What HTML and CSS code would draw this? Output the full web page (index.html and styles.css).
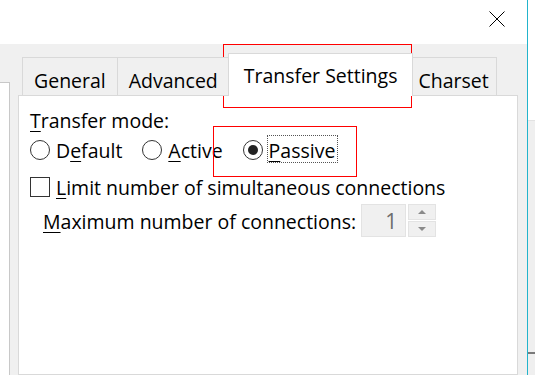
FILE: index.html
```html
<!DOCTYPE html>
<html lang="en">
<head>
  <meta charset="UTF-8">
  <title>Site settings - Transfer Settings</title>
  <link rel="stylesheet" href="styles.css">
</head>
<body>
  <div class="screen">
    <div class="window">
      <div class="titlebar">
        <button class="close" aria-label="Close">
          <svg width="16" height="16" viewBox="0 0 16 16"><path d="M0.5 0.5 L15.5 15.5 M15.5 0.5 L0.5 15.5" stroke="#000" stroke-width="1" fill="none"/></svg>
        </button>
      </div>
      <div class="dialog">
        <div class="sidelist"></div>
        <div class="tabs">
          <div class="tabstrip">
            <div class="tab">General</div>
            <div class="tab">Advanced</div>
            <div class="tab selected">Transfer Settings</div>
            <div class="tab">Charset</div>
          </div>
          <div class="panel">
            <div class="row heading"><u>T</u>ransfer mode:</div>
            <div class="row options">
              <label class="option"><span class="radio"></span><span class="text">D<u>e</u>fault</span></label>
              <label class="option"><span class="radio"></span><span class="text"><u>A</u>ctive</span></label>
              <label class="option"><span class="radio checked"></span><span class="text focus"><u>P</u>assive</span></label>
            </div>
            <label class="row option check-row"><span class="checkbox"></span><span class="text"><u>L</u>imit number of simultaneous connections</span></label>
            <div class="row maxconn">
              <span class="text"><u>M</u>aximum number of connections:</span>
              <div class="spinner">
                <div class="spin-value">1</div>
                <div class="spin-buttons">
                  <div class="spin-btn"><span class="arrow up"></span></div>
                  <div class="spin-btn"><span class="arrow down"></span></div>
                </div>
              </div>
            </div>
          </div>
        </div>
      </div>
    </div>
    <div class="edge"></div>
    <div class="behind"><div class="behind-bar"></div></div>
  </div>
  <!-- highlight marks -->
  <div class="mark mark-tab"></div>
  <div class="mark mark-passive"></div>
</body>
</html>
```

FILE: styles.css
```css
* { box-sizing: border-box; margin: 0; padding: 0; }
html, body { width: 100%; height: 100%; overflow: hidden; }
body {
  background: #fff; color: #000;
  font-family: "Open Sans", "Noto Sans", sans-serif; font-size: 19.5px; line-height: 28px;
}
u { text-decoration-thickness: 1px; text-underline-offset: 3px; }

.screen { display: flex; height: 375px; }
.window { width: 527px; display: flex; flex-direction: column; }
.edge { width: 1px; background: #22b4cc; }
.behind { flex: 1; background: #fff; position: relative; }
.behind-bar { position: absolute; left: 0; right: 0; top: 120px; bottom: 0; background: #efefef; border-top: 1px solid #e2e2e2; }
.behind-bar::after { content: ""; position: absolute; left: 0; right: 0; top: 231px; height: 2px; background: #7a7a7a; }

/* title bar */
.titlebar { height: 44px; background: #fff; display: flex; justify-content: flex-end; padding-right: 7px; }
.close { border: none; background: none; width: 46px; display: flex; align-items: center; justify-content: center; padding-bottom: 7px; }

/* dialog body */
.dialog { flex: 1; display: flex; background: #f0f0f0; }
.sidelist { width: 10px; margin-top: 38px; background: #fff; border: 1px solid #c8c8c8; border-left: none; border-bottom: none; }
.tabs { width: 500px; margin-left: 8px; margin-top: 9px; display: flex; flex-direction: column; }

.tabstrip { display: flex; align-items: flex-end; padding-left: 4px; margin-bottom: -1px; position: relative; z-index: 1; }
.tab {
  border: 1px solid #d9d9d9; background: #f0f0f0;
  padding: 9px 11px 0; white-space: nowrap;
}
.tab + .tab { margin-left: -1px; }
.tab:last-child { padding: 9px 7px 0; }
.tab.selected {
  background: #fff; border-bottom: none;
  padding: 8px 15px 6px; margin: 0 -2px; position: relative; z-index: 1;
}

.panel { flex: 1; background: #fff; border: 1px solid #d9d9d9; padding: 11px 11px; }
.row { display: flex; align-items: center; }
.text { padding-top: 3px; }
.options { margin-top: -1px; gap: 20px; }
.option { display: flex; align-items: center; gap: 6px; }
.radio { width: 20px; height: 20px; border: 1px solid #333; border-radius: 50%; position: relative; }
.radio.checked::after {
  content: ""; position: absolute; left: 4px; top: 4px; width: 10px; height: 10px;
  border-radius: 50%; background: #222;
}
.focus { position: relative; }
.focus::before {
  content: ""; position: absolute; left: -2px; right: -3px; top: 1px; bottom: 2px;
  border: 1px dotted #555;
}
.check-row { margin-top: 6px; }
.checkbox { width: 20px; height: 20px; border: 1px solid #333; }

.maxconn { margin-top: 2px; padding-left: 13px; gap: 5px; }
.maxconn .text { padding-top: 2px; }
.spinner { display: flex; gap: 2px; }
.spin-value {
  width: 45px; height: 33px; background: #f0f0f0; border: 1px solid #e3e3e3;
  color: #6d6d6d; text-align: right; padding: 2px 8px 0 0; font-size: 21px;
}
.spin-buttons { display: flex; flex-direction: column; gap: 1px; }
.spin-btn { width: 28px; height: 16px; background: #f0f0f0; border: 1px solid #e3e3e3; display: flex; align-items: center; justify-content: center; }
.arrow { width: 0; height: 0; border-left: 4px solid transparent; border-right: 4px solid transparent; }
.arrow.up { border-bottom: 4px solid #8a8a8a; }
.arrow.down { border-top: 4px solid #8a8a8a; }

/* red highlight marks */
.mark { position: absolute; border: 1px solid #f00; }
.mark-tab { left: 223px; top: 44px; width: 189px; height: 64px; }
.mark-passive { left: 213px; top: 126px; width: 144px; height: 51px; }
```
